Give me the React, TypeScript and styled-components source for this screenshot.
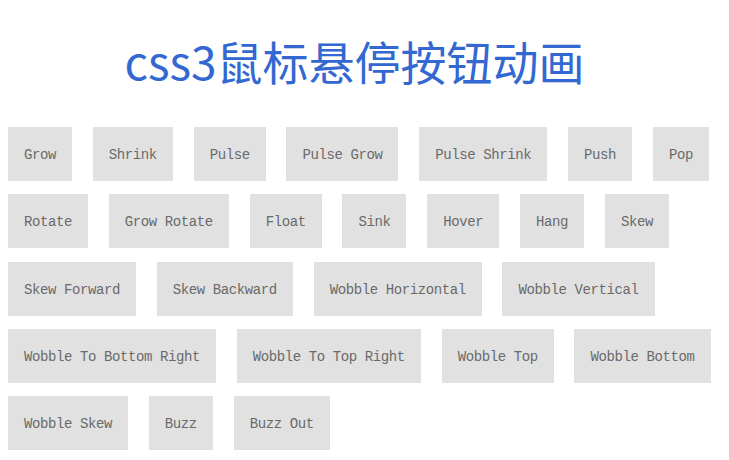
import React from "react";
import styled, { createGlobalStyle } from "styled-components";

const GlobalStyle = createGlobalStyle`
  html, body {
    margin: 0;
    padding: 0;
    background: #ffffff;
  }
  body {
    font-family: "Liberation Mono", "DejaVu Sans Mono", monospace;
  }
`;

const Page = styled.div`
  display: flex;
  flex-direction: column;
  width: 729px;
  box-sizing: border-box;
  padding: 0 8px;
`;

const Title = styled.h1`
  margin: 25px 0 32px;
  padding-right: 20px;
  text-align: center;
  font-family: "Noto Sans CJK SC", "Noto Sans", sans-serif;
  font-weight: 400;
  font-size: 46px;
  line-height: 70px;
  color: #3367d1;
`;

const ButtonGrid = styled.div`
  display: flex;
  flex-wrap: wrap;
  column-gap: 20.8px;
  row-gap: 13.3px;
`;

const HoverButton = styled.a`
  display: block;
  box-sizing: border-box;
  height: 54px;
  padding: 17px 16px 15px;
  background: #e1e1e1;
  color: #6a6a6a;
  font-family: "Liberation Mono", "DejaVu Sans Mono", monospace;
  font-size: 14px;
  letter-spacing: -0.4px;
  line-height: 22px;
  white-space: pre;
  text-decoration: none;
  cursor: pointer;
`;

const effects = [
  "Grow",
  "Shrink",
  "Pulse",
  "Pulse Grow",
  "Pulse Shrink",
  "Push",
  "Pop",
  "Rotate",
  "Grow Rotate",
  "Float",
  "Sink",
  "Hover",
  "Hang",
  "Skew",
  "Skew Forward",
  "Skew Backward",
  "Wobble Horizontal",
  "Wobble Vertical",
  "Wobble To Bottom Right",
  "Wobble To Top Right",
  "Wobble Top",
  "Wobble Bottom",
  "Wobble Skew",
  "Buzz",
  "Buzz Out",
];

export default function App() {
  return (
    <>
      <GlobalStyle />
      <Page>
        <Title>css3鼠标悬停按钮动画</Title>
        <ButtonGrid>
          {effects.map((name) => (
            <HoverButton key={name}>{name}</HoverButton>
          ))}
        </ButtonGrid>
      </Page>
    </>
  );
}
